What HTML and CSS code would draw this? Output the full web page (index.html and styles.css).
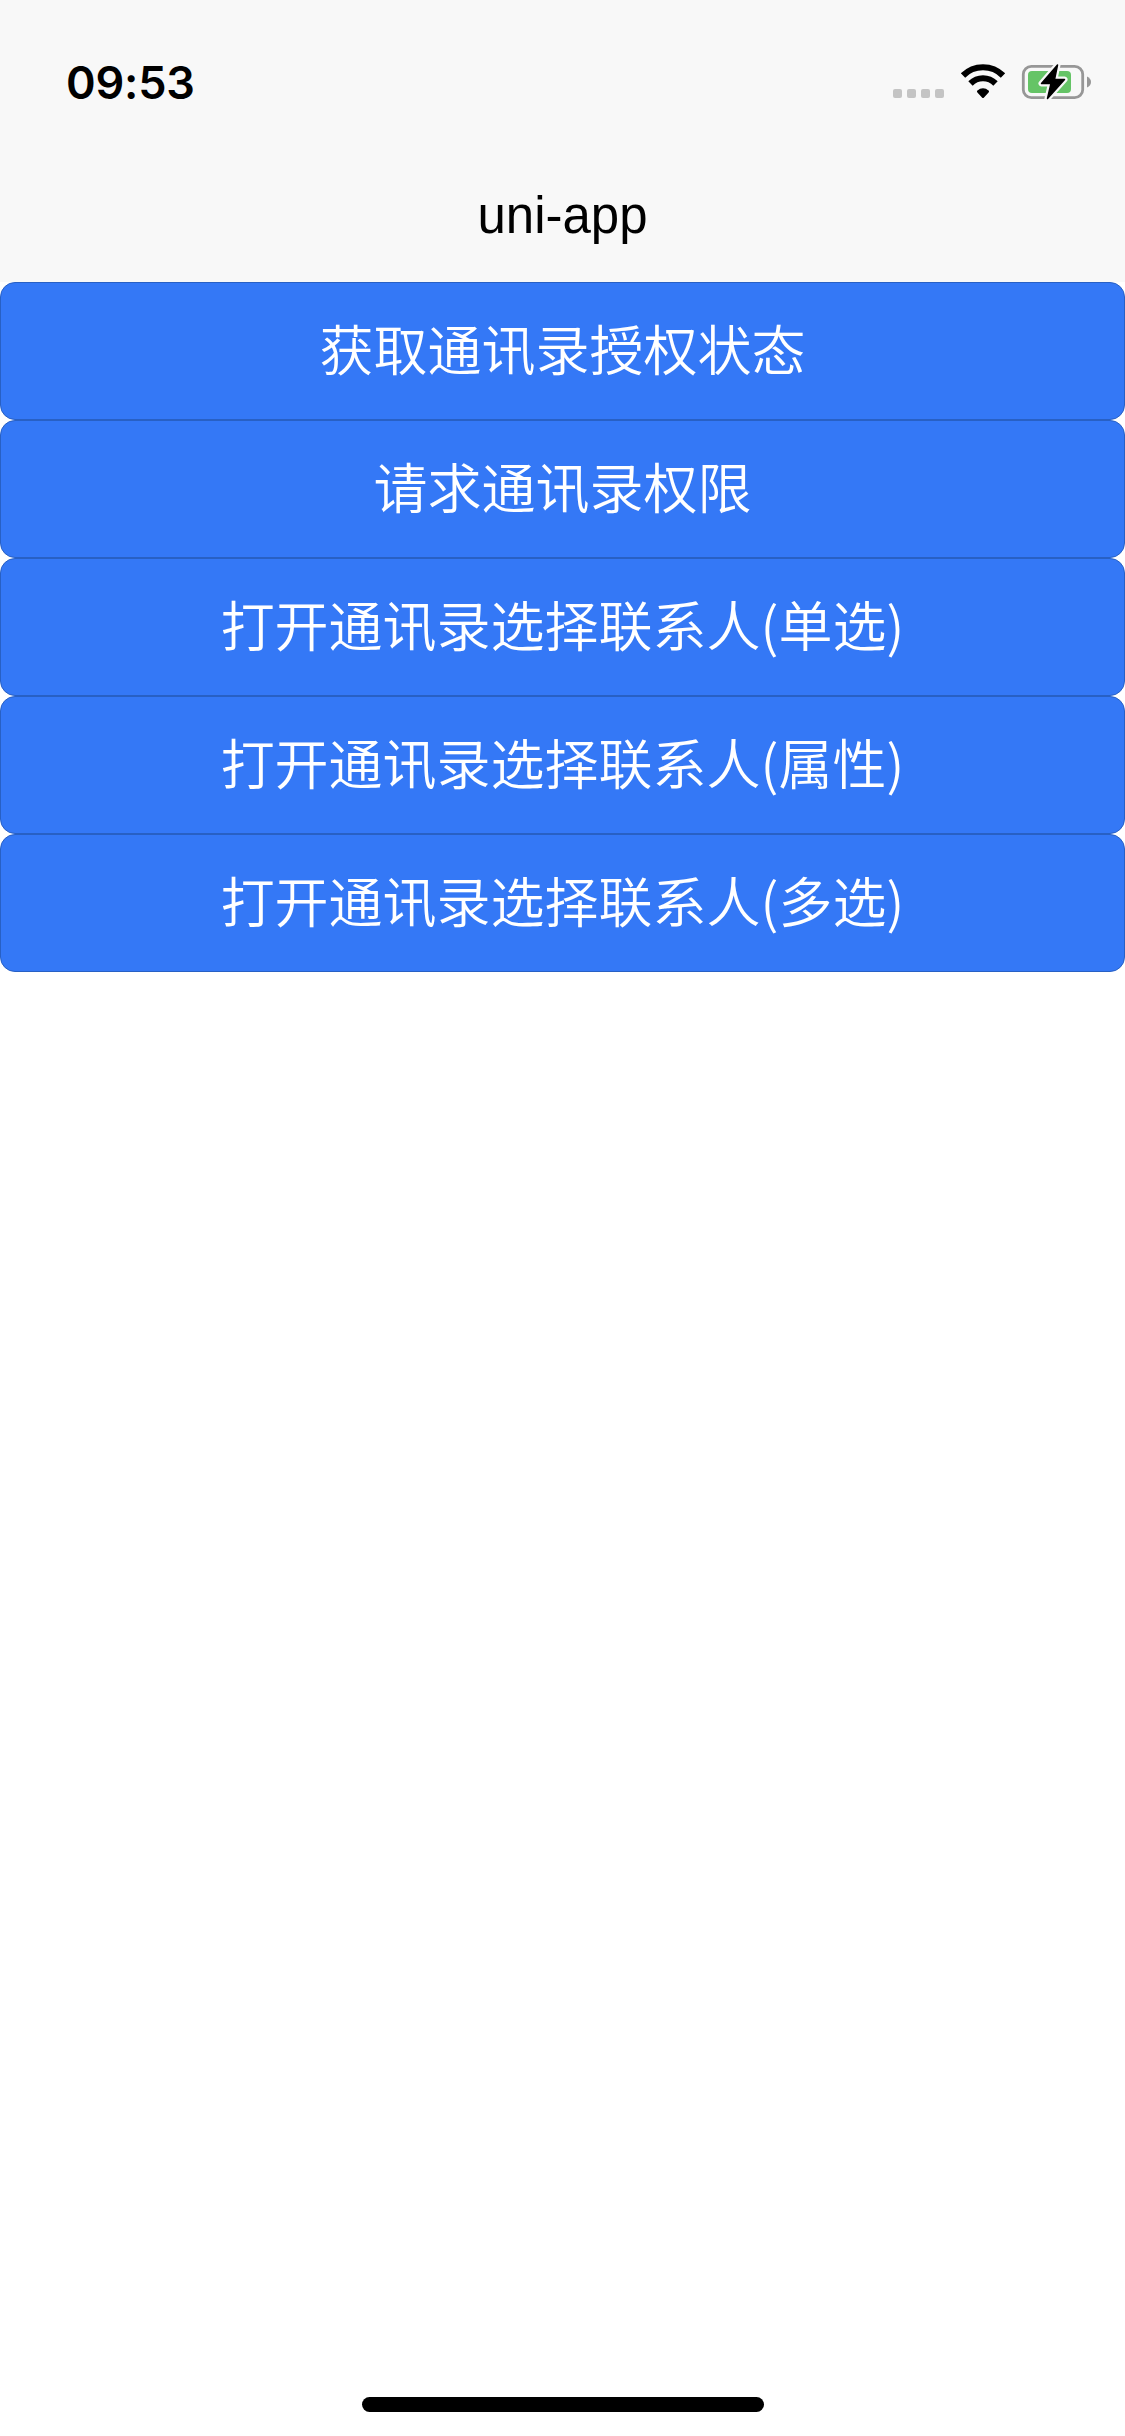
FILE: index.html
```html
<!DOCTYPE html>
<html lang="zh-CN">
<head>
  <meta charset="UTF-8">
  <meta name="viewport" content="width=device-width, initial-scale=1.0">
  <title>uni-app</title>
  <link rel="stylesheet" href="styles.css">
</head>
<body>
  <header class="header">
    <div class="status-bar">
      <span class="time">09:53</span>
      <div class="status-icons">
        <div class="signal">
          <i></i><i></i><i></i><i></i>
        </div>
        <svg class="wifi" width="46" height="36" viewBox="0 0 46 36">
          <path d="M3 12.500 C14 1.500 32 1.500 43 12.500" fill="none" stroke="#000" stroke-width="6.200"/>
          <path d="M10.500 20.500 C17.500 13.500 28.500 13.500 35.500 20.500" fill="none" stroke="#000" stroke-width="6.200"/>
          <path d="M17.400 27.600 C20.500 24.300 25.500 24.300 28.600 27.600 C29.200 28.200 29.200 28.800 28.600 29.400 L24 34.500 Q23 35.500 22 34.500 L17.400 29.400 C16.800 28.800 16.800 28.200 17.400 27.600Z"/>
        </svg>
        <svg class="battery" width="72" height="40" viewBox="0 0 72 40">
          <rect x="3.300" y="6.300" width="59.400" height="31.400" rx="8" fill="none" stroke="#979797" stroke-width="2.800"/>
          <path d="M67 16.500 Q71 18.500 71 22 Q71 25.500 67 27.500Z" fill="#979797"/>
          <rect x="8" y="11" width="43" height="22" rx="4" fill="#65c466"/>
          <path d="M37.500 5 L21.500 23.500 H31 L27.500 38.500 L44.500 19.500 H34.500Z" fill="#000" stroke="#f8f8f8" stroke-width="6" stroke-linejoin="round"/>
          <path d="M37.500 5 L21.500 23.500 H31 L27.500 38.500 L44.500 19.500 H34.500Z" fill="#000" stroke="#000" stroke-width="1.500" stroke-linejoin="round"/>
        </svg>
      </div>
    </div>
    <h1 class="title">uni-app</h1>
  </header>

  <main class="content">
    <button class="btn">获取通讯录授权状态</button>
    <button class="btn">请求通讯录权限</button>
    <button class="btn">打开通讯录选择联系人(单选)</button>
    <button class="btn">打开通讯录选择联系人(属性)</button>
    <button class="btn">打开通讯录选择联系人(多选)</button>
  </main>

  <footer class="footer">
    <div class="home-indicator"></div>
  </footer>
</body>
</html>
```
FILE: styles.css
```css
* {
  box-sizing: border-box;
}
body {
  margin: 0;
  height: 2436px;
  display: flex;
  flex-direction: column;
  background: #fff;
  color: #000;
  font-family: "Liberation Sans", "Noto Sans CJK SC", sans-serif;
}
.header {
  height: 282px;
  background: #f8f8f8;
}
.status-bar {
  height: 150px;
  padding: 0 33px 0 66px;
  display: flex;
  justify-content: space-between;
  align-items: flex-start;
}
.time {
  padding-top: 55px;
  font-family: Inter, sans-serif;
  font-size: 45px;
  font-weight: 600;
  line-height: 56px;
  letter-spacing: -0.2px;
}
.status-icons {
  display: flex;
  padding-top: 60px;
}
.signal {
  display: flex;
  gap: 5px;
  padding-top: 29px;
  margin-right: 16px;
}
.signal i {
  width: 9px;
  height: 9px;
  border-radius: 2px;
  background: #c4c4c4;
}
.wifi {
  margin: 3px 14px 0 0;
}
.title {
  margin: 0;
  height: 132px;
  line-height: 132px;
  font-size: 51px;
  font-weight: 400;
  text-align: center;
}
.content {
  flex: 1;
}
.btn {
  display: block;
  width: 100%;
  height: 138px;
  padding: 0 0 6px;
  border: 1px solid #2860c4;
  border-radius: 15px;
  background: #3478f6;
  color: #fff;
  font-family: "Noto Sans CJK SC", sans-serif;
  font-size: 54px;
  font-weight: 350;
  line-height: 80px;
}
.footer {
  display: flex;
  justify-content: center;
  padding-bottom: 24px;
}
.home-indicator {
  width: 402px;
  height: 15px;
  border-radius: 8px;
  background: #000;
}
```
